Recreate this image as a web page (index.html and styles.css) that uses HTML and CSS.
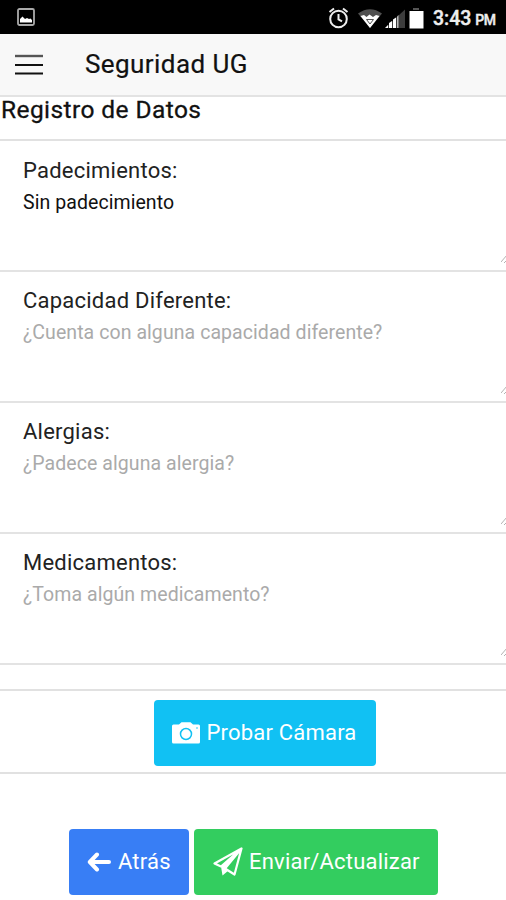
FILE: index.html
```html
<!DOCTYPE html>
<html lang="es">
<head>
<meta charset="utf-8">
<title>Seguridad UG</title>
<link rel="stylesheet" href="styles.css">
</head>
<body>
<div class="status">
  <svg class="status-photo" width="18" height="18" viewBox="0 0 18 18"><rect x="1" y="1" width="16" height="16" rx="1.5" fill="none" stroke="#aaa" stroke-width="1.8"/><path d="M3 14.500V11l2.500-2.500L8 11l2-1 2 1 1.500-.5L15 12v2.500z" fill="#fff"/></svg>
  <svg class="status-icons" width="97" height="24" viewBox="0 0 97 24">
    <g fill="none" stroke="#eee" stroke-width="2"><circle cx="10.500" cy="13" r="8.300"/><path d="M10.500 8v5.300l3.500 2M1.500 6 6 2.500M15 2.500 19.500 6" stroke-width="2"/></g>
    <path d="M30 7.500Q42-1 54 7.500L42 22z" fill="#505050"/>
    <path d="M32.500 10l3.500-1 2.500 2 3-2.500 3.500 2.500 3-2 3.500 1L42 22z" fill="#fff"/>
    <path d="M38.500 13.500h7L42 18z" fill="none" stroke="#555"/>
    <path d="M57 22 77 3.500V22z" fill="#3d3d3d"/>
    <path d="M57 22l3-3v3zM61 22v-5l3-2v7zM65 22v-8.500l3-2V22z" fill="#fff"/>
    <path d="M69 22V10.500l1.500-1.500v13z" fill="#bbb"/>
    <path d="M85 2h6v2h-6z" fill="#555"/><path d="M81.500 5h14v17.500h-14z" fill="#fff"/>
  </svg>
  <span class="clock">3:43 <small>PM</small></span>
</div>
<header class="toolbar">
  <svg width="28" height="22" viewBox="0 0 28 22"><path d="M0 2h28" stroke="#555" stroke-width="2.400"/><path d="M0 11h28M0 19.500h28" stroke="#111" stroke-width="2"/></svg>
  <h1>Seguridad UG</h1>
</header>
<main>
  <h2>Registro de Datos</h2>
  <section class="field"><label>Padecimientos:</label><p class="value">Sin padecimiento</p><svg class="grip" width="5" height="8" viewBox="0 0 5 8"><path d="M0 7l6-7M3 8l3-3" stroke="#aaa" stroke-width=".9"/></svg></section>
  <section class="field"><label>Capacidad Diferente:</label><p>¿Cuenta con alguna capacidad diferente?</p><svg class="grip" width="5" height="8" viewBox="0 0 5 8"><path d="M0 7l6-7M3 8l3-3" stroke="#aaa" stroke-width=".9"/></svg></section>
  <section class="field"><label>Alergias:</label><p>¿Padece alguna alergia?</p><svg class="grip" width="5" height="8" viewBox="0 0 5 8"><path d="M0 7l6-7M3 8l3-3" stroke="#aaa" stroke-width=".9"/></svg></section>
  <section class="field"><label>Medicamentos:</label><p>¿Toma algún medicamento?</p><svg class="grip" width="5" height="8" viewBox="0 0 5 8"><path d="M0 7l6-7M3 8l3-3" stroke="#aaa" stroke-width=".9"/></svg></section>
  <div class="camera-row">
    <button class="btn camera"><svg width="28" height="22" viewBox="0 0 28 22"><path d="M1.500 2.500H7L9.500.3h9L21 2.500h5.500Q28 2.500 28 4V20q0 1.500-1.500 1.500h-25Q0 21.500 0 20V4q0-1.500 1.500-1.500z" fill="#fff"/><circle cx="14" cy="12" r="5.500" fill="none" stroke="#11c1f3" stroke-width="1.500"/><circle cx="25" cy="6" r=".8" fill="#11c1f3"/></svg><span>Probar Cámara</span></button>
  </div>
  <div class="actions">
    <button class="btn back"><svg width="24" height="20" viewBox="0 0 24 20"><path d="M22 10H4M10 2.500 2.800 10l7.200 7.500" fill="none" stroke="#fff" stroke-width="4" stroke-linecap="round" stroke-linejoin="round"/></svg><span>Atrás</span></button>
    <button class="btn send"><svg width="30" height="30" viewBox="0 0 30 30"><path d="M28.500 1.500 1.500 16.500l6.500 3 20.500-18L12 21.500l9.500 6z" fill="none" stroke="#fff" stroke-width="2.200" stroke-linejoin="round"/><path d="M8 19.500 9.500 28.500l6-5-3.500-2L28.500 1.500z" fill="#fff"/></svg><span>Enviar/Actualizar</span></button>
  </div>
</main>
</body>
</html>
```
FILE: styles.css
```css
* { box-sizing: border-box; }
body { margin: 0; width: 506px; height: 900px; overflow: hidden; background: #fff; color: #111; font-family: Roboto, "Liberation Sans", sans-serif; }
h1, h2, p { margin: 0; }
svg { display: block; flex: none; }
.status { display: flex; align-items: center; height: 34px; background: #000; color: #eee; padding-left: 17px; }
.status-icons { margin-left: 293px; margin-top: 2px; }
.clock { margin-left: 8px; margin-top: 4px; font-size: 19.5px; font-weight: 500; white-space: nowrap; line-height: 24px; -webkit-text-stroke: .4px #eee; }
.clock small { font-size: 14px; margin-left: -1px; letter-spacing: -.4px; }
.toolbar { display: flex; align-items: center; height: 63px; padding-left: 15px; background: #f8f8f8; border-bottom: 2px solid #e3e3e3; }
.toolbar h1 { margin: -2px 0 0 42px; font-size: 26px; font-weight: 400; line-height: 30px; letter-spacing: .42px; -webkit-text-stroke: .2px #111; }
h2 { height: 44px; padding-left: 1px; border-bottom: 2px solid #e1e1e1; font-size: 24.5px; font-weight: 400; line-height: 26px; letter-spacing: .42px; -webkit-text-stroke: .3px #111; }
.field { position: relative; height: 131px; padding: 15px 23px 0; border-bottom: 2px solid #e3e3e3; }
.field:first-of-type { padding-top: 16px; }
.field label { display: block; width: max-content; font-size: 22px; line-height: 28px; color: #222; letter-spacing: .23px; }
.field p { width: max-content; margin-top: 5px; font-size: 19.5px; line-height: 26px; color: #aaa; letter-spacing: .07px; }
.field .value { color: #111; }
.grip { position: absolute; right: 0; bottom: 7px; }
.camera-row { display: flex; justify-content: center; margin-top: 24px; height: 85px; padding: 9px 0 0 23px; border-top: 2px solid #e1e1e1; border-bottom: 2px solid #e1e1e1; }
.btn { display: flex; align-items: center; height: 66px; border: 0; border-radius: 4px; color: #fff; font: 400 22px/28px Roboto, sans-serif; letter-spacing: .2px; padding: 0; white-space: nowrap; }
.camera { width: 222px; padding-left: 18px; gap: 7px; background: #11c1f3; }
.actions { display: flex; gap: 5px; margin-top: 55px; padding-left: 69px; }
.back { width: 120px; padding-left: 18px; gap: 7px; background: #387ef5; }
.send { width: 244px; padding-left: 19px; gap: 6px; background: #33cd5f; }
```
